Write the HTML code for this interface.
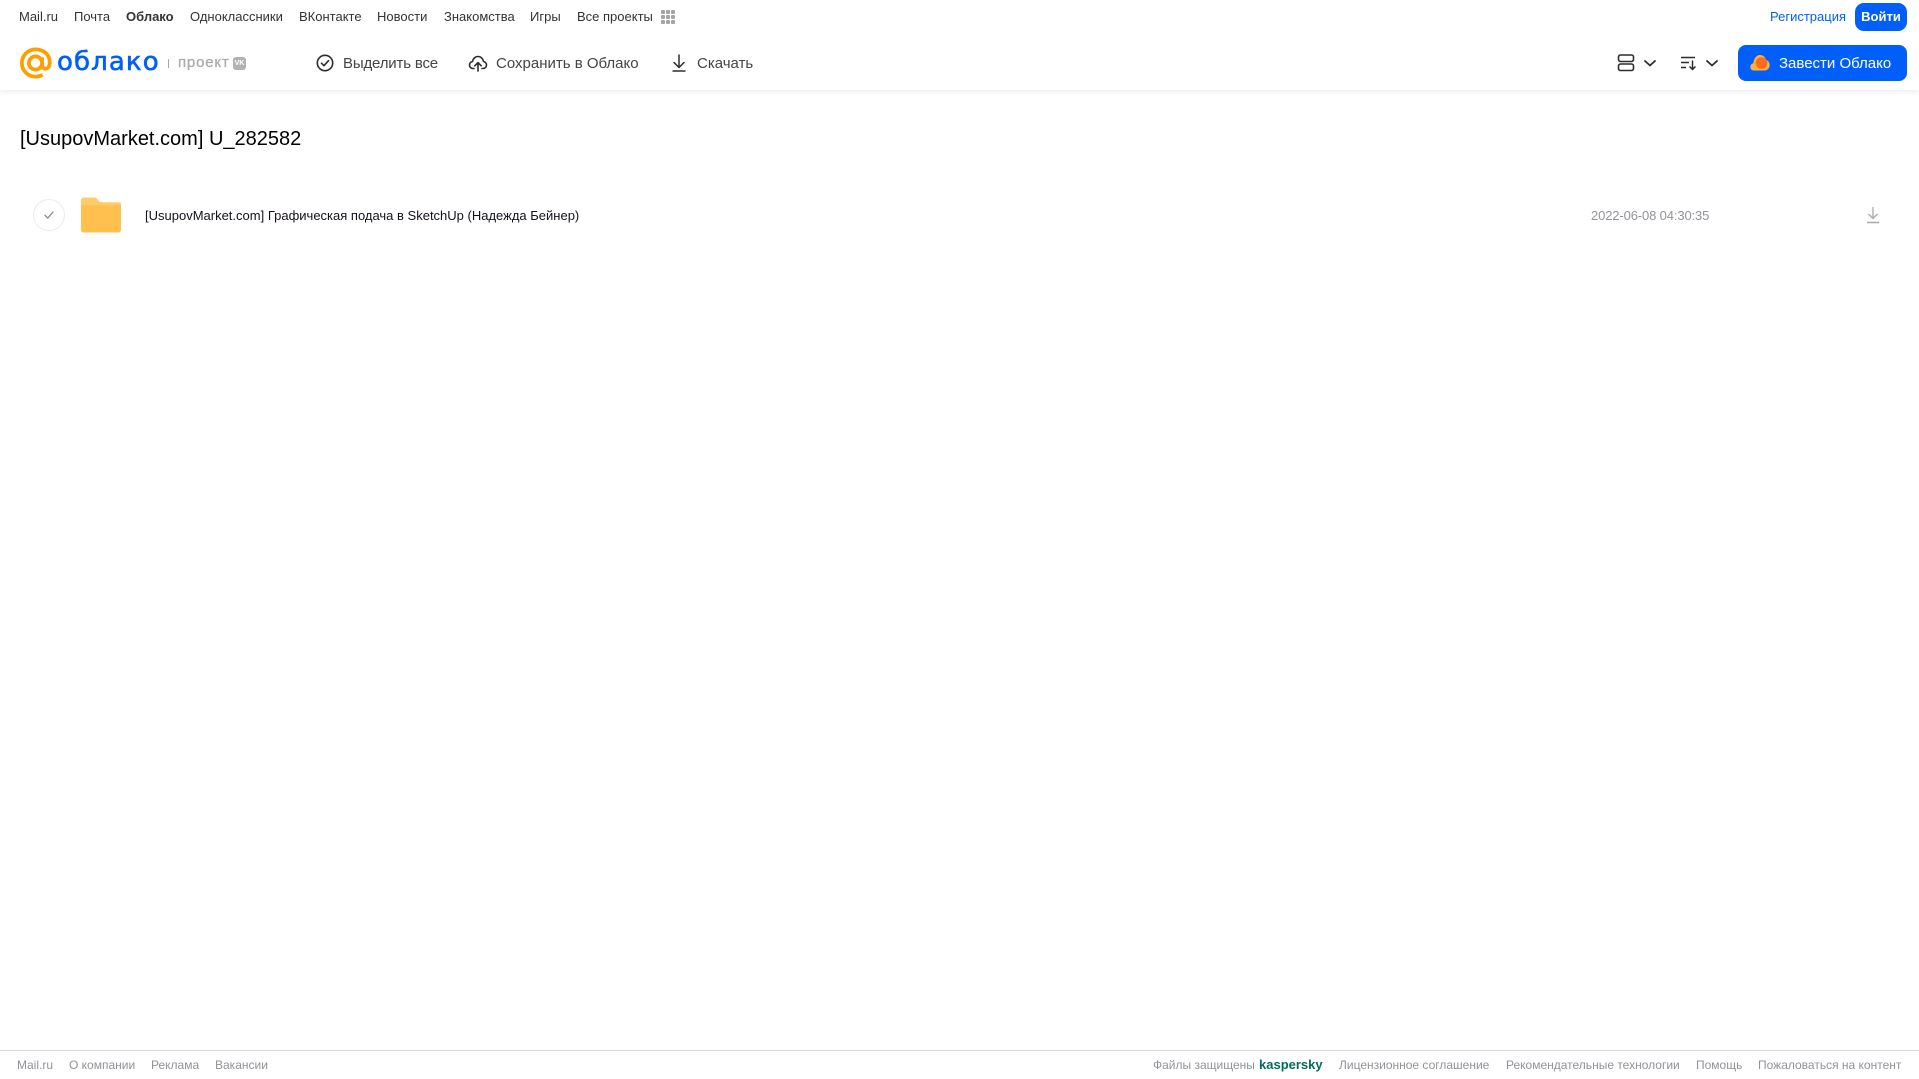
<!DOCTYPE html>
<html lang="ru"><head><meta charset="utf-8"><title>Облако</title>
<style>
html,body{margin:0;padding:0;background:#fff;overflow:hidden}
body{width:1919px;height:1079px;position:relative;font-family:"Liberation Sans",Arial,sans-serif;}
.t{position:absolute;white-space:nowrap;line-height:20px;height:20px}
.n{top:7px;font-size:13px;color:#333}
.a{top:54px;font-size:15px;color:#444;letter-spacing:-.17px}
.f{top:1055px;font-size:12px;color:#919399}
svg{position:absolute;display:block}
#hd{position:absolute;left:0;top:0;width:1919px;height:90px;background:#fff;box-shadow:0 1px 6px rgba(0,0,0,.09)}
</style></head><body>
<div id="hd"></div>
<span class="t n" style="left:19px">Mail.ru</span>
<span class="t n" style="left:74px">Почта</span>
<span class="t n" style="left:126px;font-weight:700">Облако</span>
<span class="t n" style="left:190px">Одноклассники</span>
<span class="t n" style="left:299px">ВКонтакте</span>
<span class="t n" style="left:377px">Новости</span>
<span class="t n" style="left:444px">Знакомства</span>
<span class="t n" style="left:530px">Игры</span>
<span class="t n" style="left:577px">Все проекты</span>
<svg style="left:660px;top:9px" width="16" height="16" fill="#a3a5a9"><g><rect x="1" y="1" width="4" height="4" rx="1"/><rect x="6" y="1" width="4" height="4" rx="1"/><rect x="11" y="1" width="4" height="4" rx="1"/><rect x="1" y="6" width="4" height="4" rx="1"/><rect x="6" y="6" width="4" height="4" rx="1"/><rect x="11" y="6" width="4" height="4" rx="1"/><rect x="1" y="11" width="4" height="4" rx="1"/><rect x="6" y="11" width="4" height="4" rx="1"/><rect x="11" y="11" width="4" height="4" rx="1"/></g></svg>
<span class="t" style="left:1770px;top:7px;font-size:13px;color:#005ff9">Регистрация</span>
<div style="position:absolute;left:1855px;top:3px;width:52px;height:28px;border-radius:9px;background:#005ff9;color:#fff;font-size:13px;font-weight:700;line-height:27px;text-align:center">Войти</div>

<svg style="left:19px;top:47px" width="33" height="32" viewBox="0 0 35 34" fill="none" stroke="#ff9e00" stroke-width="4"><circle cx="17.500" cy="17" r="7"/><path d="M24.500 11v8.500c0 5 7.500 5 8-1.500C33.500 8 26 2.500 17.500 2.500 9 2.500 3 9.500 3 17c0 8 6.500 14.500 14.500 14.500 3 0 5.500-.7 7.500-2"/></svg>
<span class="t" style="left:57px;top:45px;height:34px;line-height:34px;font-family:'DejaVu Sans',sans-serif;font-size:26px;color:#005ff9;letter-spacing:1.1px;-webkit-text-stroke:.6px #005ff9">облако</span>
<div style="position:absolute;left:168px;top:59px;width:1px;height:9px;background:#a8a8a8"></div>
<span class="t" style="left:178px;top:53px;font-size:15px;color:#a9abaf;letter-spacing:.8px;-webkit-text-stroke:.3px #a9abaf">проект</span>
<div style="position:absolute;left:233px;top:57px;width:13px;height:13px;border-radius:3px;background:#b0b2b6;color:#fff;font-size:7px;font-weight:700;line-height:13px;text-align:center">VK</div>

<svg style="left:315px;top:53px" width="20" height="20" viewBox="0 0 20 20" fill="none" stroke="#2c2d2e" stroke-width="1.600"><circle cx="10" cy="10" r="7.700"/><path d="M6.500 10.200l2.500 2.500 4.500-5" stroke-linecap="round" stroke-linejoin="round"/></svg>
<span class="t a" style="left:343px">Выделить все</span>
<svg style="left:468px;top:53px" width="20" height="20" viewBox="0 0 20 20" fill="none" stroke="#2c2d2e" stroke-width="1.600" stroke-linecap="round" stroke-linejoin="round"><path d="M6 15.500H5C2.800 15.500 1.500 13.800 1.500 12c0-1.800 1.200-3.200 3-3.500C5 5.500 7.300 3.500 10 3.500s5 2 5.500 5c1.800.3 3 1.700 3 3.500 0 1.800-1.300 3.500-3.500 3.500h-1"/><path d="M10 18v-8M6.800 12.800L10 9.600l3.200 3.200"/></svg>
<span class="t a" style="left:496px;letter-spacing:0">Сохранить в Облако</span>
<svg style="left:669px;top:53px" width="20" height="20" viewBox="0 0 20 20" fill="none" stroke="#2c2d2e" stroke-width="1.500"><path d="M10 2v12M5 9.500l5 5 5-5" stroke-linecap="round" stroke-linejoin="round"/><path d="M3.500 18h13"/></svg>
<span class="t a" style="left:697px;letter-spacing:0">Скачать</span>

<svg style="left:1617px;top:54px" width="18" height="18" viewBox="0 0 18 18" fill="none" stroke="#2c2d2e" stroke-width="1.600"><rect x="1.500" y="1" width="15" height="6.500" rx="2"/><rect x="1.500" y="10" width="15" height="6.500" rx="2"/></svg>
<svg style="left:1643px;top:59px" width="14" height="9" viewBox="0 0 14 9" fill="none" stroke="#2c2d2e" stroke-width="1.800" stroke-linecap="round" stroke-linejoin="round"><path d="M2 2l5 4.500L12 2"/></svg>
<svg style="left:1680px;top:54px" width="18" height="18" viewBox="0 0 18 18" fill="none" stroke="#2c2d2e" stroke-width="1.500"><path d="M1 3.500h14M1 8.500h8M1 13.500h5"/><path d="M12.500 6.500v9M9.500 12.500l3 3 3-3" stroke-linejoin="round"/></svg>
<svg style="left:1705px;top:59px" width="14" height="9" viewBox="0 0 14 9" fill="none" stroke="#2c2d2e" stroke-width="1.800" stroke-linecap="round" stroke-linejoin="round"><path d="M2 2l5 4.500L12 2"/></svg>

<div style="position:absolute;left:1738px;top:45px;width:169px;height:36px;border-radius:8px;background:#005ff9"></div>
<svg style="left:1750px;top:54px" width="20" height="17" viewBox="0 0 20 17"><path d="M4 16.500C1.800 16.500.3 15 .3 13c0-1.800 1.200-3.300 3-3.600C3.800 4.500 6.500 1 10 1c3 0 5.300 2 6 5 2.200.5 3.700 2.500 3.700 5 0 3-2.200 5.500-5.200 5.500z" fill="#ffb13d"/><circle cx="11.500" cy="9" r="5.800" fill="#ff6a1f"/></svg>
<span class="t" style="left:1779px;top:54px;font-size:15px;color:#fff">Завести Облако</span>

<span class="t" style="left:20px;top:127px;height:24px;line-height:24px;font-size:20px;color:#000">[UsupovMarket.com] U_282582</span>

<div style="position:absolute;left:33px;top:199px;width:30px;height:30px;border:1px solid #ebecee;border-radius:50%"></div>
<svg style="left:43px;top:209px" width="12" height="12" viewBox="0 0 12 12" fill="none" stroke="#85878b" stroke-width="1.300" stroke-linecap="round" stroke-linejoin="round"><path d="M2 6.300l2.800 2.700L10 3"/></svg>
<svg style="left:81px;top:197px" width="40" height="36" viewBox="0 0 41 36"><path d="M3 0h10c3 0 3.500 1.500 5 3.500.8 1 1.500 1.500 3 1.500h17c1.700 0 3 1.300 3 3v25c0 1.700-1.300 3-3 3H3c-1.700 0-3-1.300-3-3V3C0 1.300 1.300 0 3 0z" fill="#ffc04d"/><path d="M0 8h41V5.500L38 5H21c-1.500 0-2.200-.5-3-1.500L15 0H3C1.300 0 0 1.300 0 3z" fill="#ffcb6b"/></svg>
<span class="t" style="left:145px;top:206px;font-size:13px;color:#16101a">[UsupovMarket.com] Графическая подача в SketchUp (Надежда Бейнер)</span>
<span class="t" style="left:1591px;top:206px;font-size:13px;color:#919399;letter-spacing:-.13px">2022-06-08 04:30:35</span>
<svg style="left:1865px;top:206px" width="16" height="18" viewBox="0 0 16 18" fill="none" stroke="#a6a8ac" stroke-width="1.300"><path d="M8 1v11M3.500 8l4.500 4.500L12.500 8"/><path d="M2 16.500h12" stroke-width="1.500"/></svg>

<div style="position:absolute;left:0;top:1050px;width:1919px;height:1px;background:#d9dadc"></div>
<span class="t f" style="left:17px">Mail.ru</span>
<span class="t f" style="left:69px">О компании</span>
<span class="t f" style="left:151px">Реклама</span>
<span class="t f" style="left:215px">Вакансии</span>
<span class="t f" style="left:1153px">Файлы защищены</span>
<span class="t f" style="left:1259px;font-size:13px;font-weight:700;color:#006d5c">kaspersky</span>
<span class="t f" style="left:1339px">Лицензионное соглашение</span>
<span class="t f" style="left:1506px">Рекомендательные технологии</span>
<span class="t f" style="left:1696px">Помощь</span>
<span class="t f" style="left:1758px">Пожаловаться на контент</span>
</body></html>
